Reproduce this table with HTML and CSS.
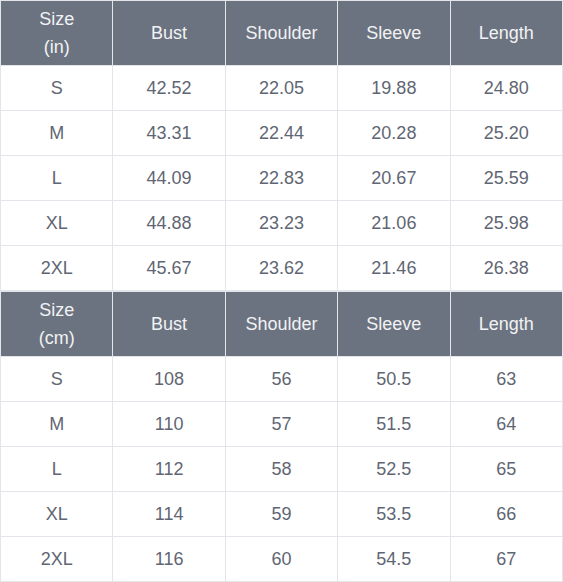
FILE: index.html
```html
<!DOCTYPE html>
<html>
<head>
<meta charset="utf-8">
<link rel="stylesheet" href="styles.css">
</head>
<body>
<table class="size-table">
  <tr><th>Size<br>(in)</th><th>Bust</th><th>Shoulder</th><th>Sleeve</th><th>Length</th></tr>
  <tr><td>S</td><td>42.52</td><td>22.05</td><td>19.88</td><td>24.80</td></tr>
  <tr><td>M</td><td>43.31</td><td>22.44</td><td>20.28</td><td>25.20</td></tr>
  <tr><td>L</td><td>44.09</td><td>22.83</td><td>20.67</td><td>25.59</td></tr>
  <tr><td>XL</td><td>44.88</td><td>23.23</td><td>21.06</td><td>25.98</td></tr>
  <tr><td>2XL</td><td>45.67</td><td>23.62</td><td>21.46</td><td>26.38</td></tr>
</table>
<table class="size-table">
  <tr><th>Size<br>(cm)</th><th>Bust</th><th>Shoulder</th><th>Sleeve</th><th>Length</th></tr>
  <tr><td>S</td><td>108</td><td>56</td><td>50.5</td><td>63</td></tr>
  <tr><td>M</td><td>110</td><td>57</td><td>51.5</td><td>64</td></tr>
  <tr><td>L</td><td>112</td><td>58</td><td>52.5</td><td>65</td></tr>
  <tr><td>XL</td><td>114</td><td>59</td><td>53.5</td><td>66</td></tr>
  <tr><td>2XL</td><td>116</td><td>60</td><td>54.5</td><td>67</td></tr>
</table>
</body>
</html>
```
FILE: styles.css
```css
html, body {
  margin: 0;
  padding: 0;
  background: #ffffff;
}
.size-table {
  width: 563px;
  border-collapse: collapse;
  table-layout: fixed;
  font-family: "Liberation Sans", Arial, sans-serif;
  font-size: 18px;
}
.size-table th,
.size-table td {
  border: 1px solid #e3e5ea;
  text-align: center;
  vertical-align: middle;
  padding: 0;
}
.size-table th {
  background: #6b7280;
  color: #f1f2f4;
  font-weight: normal;
  height: 64px;
  line-height: 28px;
}
.size-table td {
  color: #5f6673;
  height: 44px;
}
```
